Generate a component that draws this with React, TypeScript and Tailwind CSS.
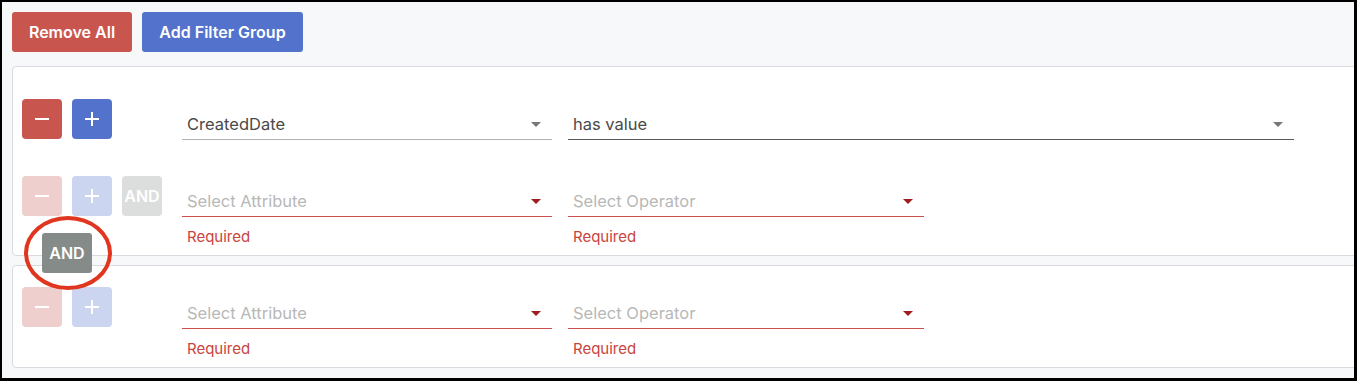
import React from 'react';

const FONT = { fontFamily: 'Inter, "Noto Sans", sans-serif' };

function Caret({ dark, error }: { dark?: boolean; error?: boolean }) {
  const c = error ? '#a11d1d' : dark ? '#777777' : '#8a8a8a';
  return (
    <svg width="10" height="5" viewBox="0 0 10 5" className="shrink-0">
      <path d="M0 0h10L5 5z" fill={c} />
    </svg>
  );
}

function SelectField({
  value,
  placeholder,
  width,
  error,
  active,
}: {
  value?: string;
  placeholder: string;
  width: string;
  error?: boolean;
  active?: boolean;
}) {
  const line = error ? 'border-[#c9504a]' : active ? 'border-[#5a5a5a]' : 'border-[#b3b3b3]';
  return (
    <div className={`flex flex-col ${width}`}>
      <div className={`h-[41px] flex items-center justify-between pl-[5px] pr-[11px] pt-[10px] border-b ${line}`}>
        <span className={`text-[16.5px] ${value ? 'text-[#4a4a4a]' : 'text-[#b8b8b8]'}`}>{value ?? placeholder}</span>
        <Caret error={error} dark={!!value} />
      </div>
      {error && <div className="pl-[5px] pt-[10px] text-[15px] leading-[20px] text-[#c9433d]">Required</div>}
    </div>
  );
}

function IconBtn({ kind, faded }: { kind: 'minus' | 'plus'; faded?: boolean }) {
  const bg =
    kind === 'minus'
      ? faded
        ? 'bg-[#efcfcd]'
        : 'bg-[#c9554f]'
      : faded
        ? 'bg-[#cbd5ef]'
        : 'bg-[#5272cc]';
  return (
    <div className={`w-10 h-10 rounded-[4px] flex items-center justify-center ${bg}`}>
      <svg width="16" height="16" viewBox="0 0 16 16">
        <path d="M1 8h14" stroke="#fff" strokeWidth="2" />
        {kind === 'plus' && <path d="M8 1v14" stroke="#fff" strokeWidth="2" />}
      </svg>
    </div>
  );
}

export default function App() {
  return (
    <div
      style={FONT}
      className="w-[1357px] h-[381px] overflow-hidden bg-[#f7f8fa] border-t-2 border-l-2 border-r-[3px] border-b-[3px] border-black relative"
    >
      <div className="pl-[10px] pt-[10px]">
        <div className="flex gap-[10px]">
          <button className="w-[120px] h-10 rounded-[3px] bg-[#c9554f] text-white font-semibold text-[16px]">
            Remove All
          </button>
          <button className="w-[161px] h-10 rounded-[3px] bg-[#5272cc] text-white font-semibold text-[16px]">
            Add Filter Group
          </button>
        </div>

        <div className="mt-[14px] w-[1400px] h-[190px] bg-white border border-[#d9dbe0] rounded-[4px] pt-[32px] pl-[9px]">
          <div className="flex items-start">
            <div className="flex gap-[10px] w-[160px]">
              <IconBtn kind="minus" />
              <IconBtn kind="plus" />
            </div>
            <div className="flex gap-[16px]">
              <SelectField value="CreatedDate" placeholder="Select Attribute" width="w-[370px]" />
              <SelectField value="has value" placeholder="Select Operator" width="w-[726px]" active />
            </div>
          </div>
          <div className="flex items-start mt-[36px]">
            <div className="flex gap-[10px] w-[160px]">
              <IconBtn kind="minus" faded />
              <IconBtn kind="plus" faded />
              <div className="w-10 h-10 rounded-[4px] bg-[#dcdddd] flex items-center justify-center overflow-visible">
                <span className="text-white font-semibold text-[16px]">AND</span>
              </div>
            </div>
            <div className="flex gap-[16px]">
              <SelectField placeholder="Select Attribute" width="w-[370px]" error />
              <SelectField placeholder="Select Operator" width="w-[356px]" error />
            </div>
          </div>
        </div>

        <div className="mt-[9px] w-[1400px] h-[103px] bg-white border border-[#d9dbe0] rounded-[4px] pt-[21px] pl-[9px]">
          <div className="flex items-start">
            <div className="flex gap-[10px] w-[160px]">
              <IconBtn kind="minus" faded />
              <IconBtn kind="plus" faded />
            </div>
            <div className="flex gap-[16px] mt-[1px]">
              <SelectField placeholder="Select Attribute" width="w-[370px]" error />
              <SelectField placeholder="Select Operator" width="w-[356px]" error />
            </div>
          </div>
        </div>
      </div>

      <div className="absolute left-[40px] top-[231px] w-[50px] h-10 rounded-[3px] bg-[#858b89] flex items-center justify-center">
        <span className="text-white font-semibold text-[16px]">AND</span>
      </div>
      <div className="absolute left-[22px] top-[214px] w-[88px] h-[74px] rounded-[50%] border-[4px] border-[#e0361f]" />
    </div>
  );
}
